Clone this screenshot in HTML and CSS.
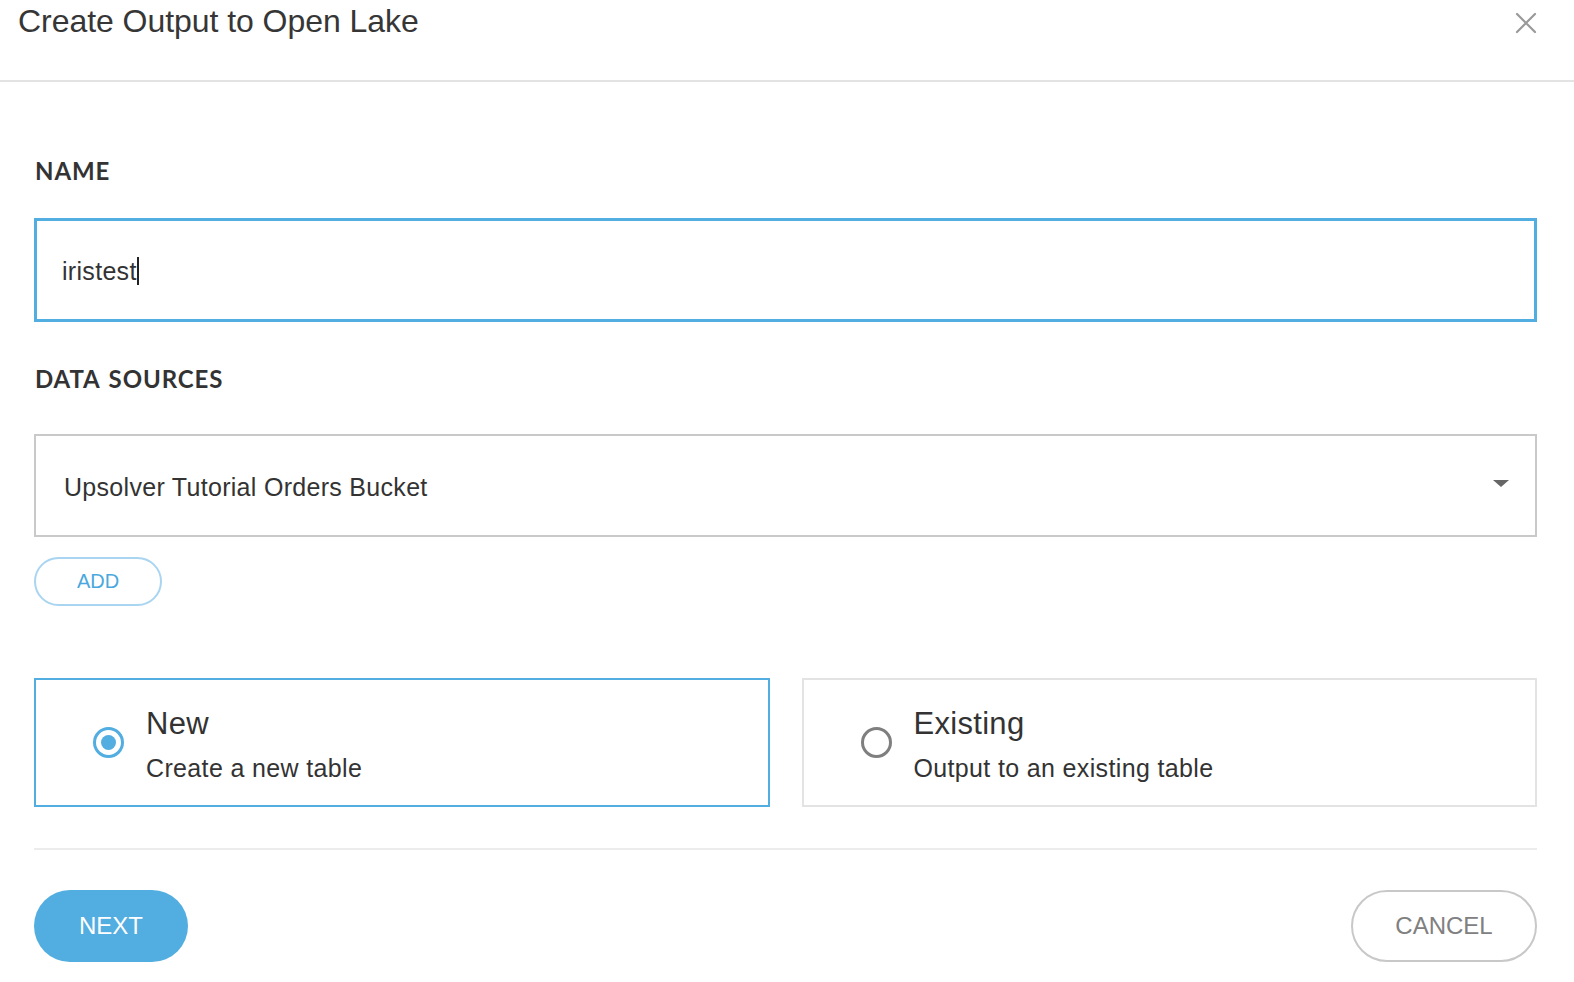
FILE: index.html
```html
<!DOCTYPE html>
<html lang="en">
<head>
<meta charset="utf-8">
<title>Create Output to Open Lake</title>
<link rel="stylesheet" href="styles.css">
</head>
<body>
<div class="modal">
  <header class="modal-header">
    <h1 class="modal-title">Create Output to Open Lake</h1>
    <button class="close-btn" aria-label="Close">
      <svg width="22" height="22" viewBox="0 0 22 22"><path d="M2 2 L20 20 M20 2 L2 20" stroke="#999" stroke-width="2.2" fill="none" stroke-linecap="round"/></svg>
    </button>
  </header>
  <main class="modal-body">
    <label class="field-label label-name">NAME</label>
    <div class="text-input" role="textbox">iristest<span class="caret"></span></div>

    <label class="field-label label-sources">DATA SOURCES</label>
    <div class="select-box">
      <span class="select-value">Upsolver Tutorial Orders Bucket</span>
      <span class="select-arrow"></span>
    </div>
    <button class="add-btn">ADD</button>

    <div class="choice-row">
      <div class="choice-card selected">
        <span class="radio checked"></span>
        <div class="choice-text">
          <div class="choice-title">New</div>
          <div class="choice-desc">Create a new table</div>
        </div>
      </div>
      <div class="choice-card">
        <span class="radio"></span>
        <div class="choice-text">
          <div class="choice-title">Existing</div>
          <div class="choice-desc">Output to an existing table</div>
        </div>
      </div>
    </div>

    <div class="divider"></div>

    <div class="footer">
      <button class="next-btn">NEXT</button>
      <button class="cancel-btn">CANCEL</button>
    </div>
  </main>
</div>
</body>
</html>
```

FILE: styles.css
```css
* { box-sizing: border-box; }
html, body { margin: 0; padding: 0; background: #fff; }
body {
  font-family: "Liberation Sans", Arial, sans-serif;
  color: #333;
  width: 1574px;
  height: 982px;
  overflow: hidden;
}
.modal { width: 1574px; }
.modal-header {
  display: flex;
  justify-content: space-between;
  align-items: flex-start;
  height: 82px;
  border-bottom: 2px solid #e3e3e3;
  padding: 0 37px 0 18px;
}
.modal-title {
  margin: 0;
  padding-top: 1px;
  font-size: 32px;
  line-height: 40px;
  font-weight: normal;
  letter-spacing: -0.05px;
  color: #363636;
}
.close-btn {
  border: 0;
  background: none;
  padding: 0;
  margin-top: 12px;
  width: 22px;
  height: 22px;
  cursor: pointer;
}
.close-btn svg { display: block; }
.modal-body {
  display: flex;
  flex-direction: column;
  align-items: stretch;
  padding: 0 37px 0 34px;
}
.field-label {
  display: block;
  font-family: Lato, "Open Sans", sans-serif;
  font-weight: 700;
  font-size: 24px;
  line-height: 30px;
  letter-spacing: 0.9px;
  word-spacing: 2px;
  color: #333;
  padding-left: 1px;
}
.label-name { margin-top: 74px; }
.label-sources { margin-top: 42px; }
.text-input {
  margin-top: 32px;
  height: 104px;
  border: 3px solid #52ade0;
  padding: 2px 0 0 25px;
  font-size: 25px;
  line-height: 96px;
  letter-spacing: 0.3px;
  color: #333;
}
.caret {
  display: inline-block;
  width: 2px;
  height: 28px;
  background: #222;
  vertical-align: -5px;
}
.select-box {
  margin-top: 40px;
  height: 103px;
  border: 2px solid #c9c9c9;
  padding: 3px 26px 0 28px;
  display: flex;
  align-items: center;
  justify-content: space-between;
}
.select-value {
  font-size: 25px;
  line-height: 30px;
  letter-spacing: 0.3px;
  color: #333;
}
.select-arrow {
  width: 0;
  height: 0;
  border-left: 8px solid transparent;
  border-right: 8px solid transparent;
  border-top: 7px solid #666;
  margin-bottom: 7px;
}
.add-btn {
  align-self: flex-start;
  margin-top: 20px;
  width: 128px;
  height: 49px;
  border: 2px solid #a9d5f1;
  border-radius: 25px;
  background: #fff;
  color: #4aa8de;
  font-family: "Liberation Sans", Arial, sans-serif;
  font-size: 20px;
  line-height: 45px;
  padding: 0;
}
.choice-row {
  margin-top: 72px;
  display: flex;
  gap: 32px;
}
.choice-card {
  flex: 1;
  height: 129px;
  border: 2px solid #e3e3e3;
  display: flex;
  align-items: center;
  padding-left: 57px;
  gap: 22px;
}
.choice-card.selected { border-color: #52ade0; }
.radio {
  width: 31px;
  height: 31px;
  flex: none;
  border-radius: 50%;
  border: 3px solid #7f7f7f;
  display: flex;
  align-items: center;
  justify-content: center;
}
.radio.checked { border-color: #52ade0; }
.radio.checked::after {
  content: "";
  width: 15px;
  height: 15px;
  border-radius: 50%;
  background: #52ade0;
}
.choice-text { padding-top: 3px; }
.choice-title {
  font-size: 31px;
  line-height: 36px;
  letter-spacing: 0.3px;
  color: #333;
}
.choice-desc {
  margin-top: 11px;
  font-size: 25px;
  line-height: 30px;
  letter-spacing: 0.35px;
  color: #333;
}
.divider {
  margin-top: 41px;
  height: 2px;
  background: #ececec;
}
.footer {
  margin-top: 40px;
  display: flex;
  justify-content: space-between;
  align-items: center;
}
.next-btn {
  width: 154px;
  height: 72px;
  border: 0;
  border-radius: 36px;
  background: #52ade0;
  color: #fff;
  font-family: "Liberation Sans", Arial, sans-serif;
  font-size: 24px;
  line-height: 72px;
  padding: 0;
}
.cancel-btn {
  width: 186px;
  height: 72px;
  border: 2px solid #c8c8c8;
  border-radius: 36px;
  background: #fff;
  color: #808080;
  font-family: "Liberation Sans", Arial, sans-serif;
  font-size: 24px;
  line-height: 68px;
  padding: 0;
}
```
